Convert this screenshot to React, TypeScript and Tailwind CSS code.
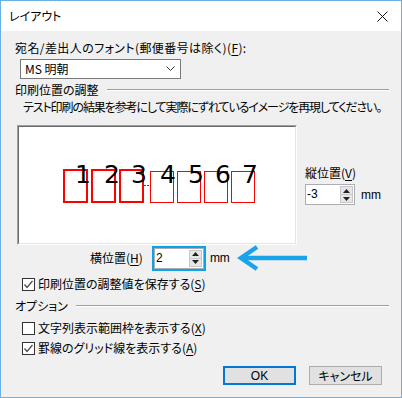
import React from "react";

const jp = "[font-family:'Noto_Sans_CJK_JP','Noto_Sans',sans-serif] [font-feature-settings:'palt']";

function U({ c }: { c: string }) {
  return <span className="underline underline-offset-2">{c}</span>;
}

function Spin({ value }: { value: string }) {
  return (
    <div className="flex h-[21px] w-[50px] border border-[#abadb3] bg-white">
      <div className="flex-1 pl-[1px] text-[12px] leading-[19px] [font-family:'Liberation_Sans',sans-serif]">{value}</div>
      <div className="my-[1px] mr-[1px] flex w-[13px] flex-col border border-[#c8c8c8] bg-[#e6e6e6]">
        <div className="flex flex-1 items-center justify-center border-b border-[#c8c8c8]">
          <svg width="7" height="4" viewBox="0 0 7 4"><path d="M3.5 0 L7 4 L0 4 Z" fill="#222" /></svg>
        </div>
        <div className="flex flex-1 items-center justify-center">
          <svg width="7" height="4" viewBox="0 0 7 4"><path d="M0 0 L7 0 L3.5 4 Z" fill="#222" /></svg>
        </div>
      </div>
    </div>
  );
}

function Check({ checked }: { checked: boolean }) {
  return (
    <div className="flex h-[13px] w-[13px] items-center justify-center border border-[#333333] bg-white">
      {checked && (
        <svg width="11" height="11" viewBox="0 0 11 11">
          <path d="M1.5 5.5 L4 8.5 L9.5 2" stroke="#505050" strokeWidth="1.3" fill="none" />
        </svg>
      )}
    </div>
  );
}

function GroupHeader({ label }: { label: string }) {
  return (
    <div className="flex h-[16px] items-center">
      <span className="text-[12px] leading-[16px]">{label}</span>
      <div className="ml-[8px] flex-1 border-t border-[#a0a0a0] border-b border-b-white" />
    </div>
  );
}

export default function App() {
  const thick = [46, 74, 102];
  const thin = [133, 160, 187, 214];
  const digits = [
    { d: "1", x: 66 },
    { d: "2", x: 95 },
    { d: "3", x: 122 },
    { d: "4", x: 151 },
    { d: "5", x: 179 },
    { d: "6", x: 206 },
    { d: "7", x: 233 },
  ];
  return (
    <div className={`flex h-[398px] w-[402px] flex-col border border-[#6cb1e6] bg-[#f0f0f0] text-[#000] ${jp}`}>
      <div className="flex h-[30px] items-center justify-between bg-white pl-[8px] pr-[13px]">
        <span className="text-[12px]">レイアウト</span>
        <svg width="11" height="11" viewBox="0 0 11 11">
          <path d="M0.5 0.5 L10.5 10.5 M10.5 0.5 L0.5 10.5" stroke="#111" strokeWidth="1" />
        </svg>
      </div>
      <div className="flex flex-1 flex-col pl-[14px] pr-[12px]">
        <div className="mt-[9px] h-[16px] text-[12px] leading-[16px] tracking-[0.4px]">
          宛名/差出人のフォント(郵便番号は除く)(<U c="F" />):
        </div>
        <div className="ml-[5px] mt-[3px] flex h-[20px] w-[161px] items-center justify-between border border-[#7a7a7a] bg-white pl-[4px] pr-[5px]">
          <span className="text-[12px] leading-[16px]">MS 明朝</span>
          <svg width="9" height="6" viewBox="0 0 9 6">
            <path d="M0.5 0.5 L4.5 4.5 L8.5 0.5" stroke="#333" strokeWidth="1" fill="none" />
          </svg>
        </div>
        <div className="mt-[3px]">
          <GroupHeader label="印刷位置の調整" />
        </div>
        <div className="ml-[8px] mt-[1px] h-[16px] text-[12px] leading-[16px] tracking-[-1.1px] whitespace-nowrap">
          テスト印刷の結果を参考にして実際にずれているイメージを再現してください。
        </div>
        <div className="mt-[10px] flex">
          <div className="ml-[2px] h-[120px] w-[280px] border-l border-t border-[#a0a0a0] border-b-white border-r-white border-b border-r">
            <div className="h-full w-full border-l border-t border-[#696969] border-b border-r border-b-[#e3e3e3] border-r-[#e3e3e3] bg-white">
              <svg width="276" height="116" viewBox="2 2 276 116">
                {thick.map((x) => (
                  <rect key={x} x={x + 1} y={45} width={23} height={32} fill="none" stroke="#ff0000" strokeWidth="2" />
                ))}
                {thin.map((x) => (
                  <rect key={x} x={x + 0.5} y={46.5} width={23} height={31} fill="none" stroke="#ff0000" strokeWidth="1" />
                ))}
                <line x1="127" y1="60.5" x2="133" y2="60.5" stroke="#ff0000" strokeWidth="1" strokeDasharray="2 1" />
                {digits.map((g) => (
                  <text
                    key={g.d}
                    x={g.x}
                    y={58}
                    textAnchor="middle"
                    fontSize="25"
                    fontFamily="'DejaVu Sans', sans-serif"
                    fill="#000"
                  >
                    {g.d}
                  </text>
                ))}
              </svg>
            </div>
          </div>
          <div className="ml-[8px] flex flex-col">
            <div className="mt-[40px] h-[16px] text-[12px] leading-[16px]">
              縦位置(<U c="V" />)
            </div>
            <div className="mt-[3px] flex items-center">
              <Spin value="-3" />
              <span className="ml-[6px] text-[12px] [font-family:'Liberation_Sans',sans-serif]">mm</span>
            </div>
          </div>
        </div>
        <div className="mt-[2px] flex h-[22px] items-center">
          <span className="ml-[75px] text-[12px] leading-[16px]">
            横位置(<U c="H" />)
          </span>
          <div className="ml-[9px] border-[3px] border-[#0ea2e6] p-0">
            <div className="-m-[1px]">
              <Spin value="2" />
            </div>
          </div>
          <span className="ml-[4px] text-[12px] [font-family:'Liberation_Sans',sans-serif]">mm</span>
          <svg className="ml-[7px]" width="70" height="26" viewBox="0 0 70 26">
            <path d="M20 2 L4 13 L20 24" stroke="#1aa3e8" strokeWidth="4.5" fill="none" strokeLinejoin="miter" />
            <line x1="5" y1="13" x2="70" y2="13" stroke="#1aa3e8" strokeWidth="4.5" />
          </svg>
        </div>
        <div className="mt-[7px] flex h-[16px] items-center">
          <div className="ml-[7px]">
            <Check checked />
          </div>
          <span className="ml-[3px] text-[12px] leading-[16px]">
            印刷位置の調整値を保存する(<U c="S" />)
          </span>
        </div>
        <div className="mt-[6px]">
          <GroupHeader label="オプション" />
        </div>
        <div className="mt-[6px] flex h-[16px] items-center">
          <div className="ml-[7px]">
            <Check checked={false} />
          </div>
          <span className="ml-[3px] text-[12px] leading-[16px]">
            文字列表示範囲枠を表示する(<U c="X" />)
          </span>
        </div>
        <div className="mt-[4px] flex h-[16px] items-center">
          <div className="ml-[7px]">
            <Check checked />
          </div>
          <span className="ml-[3px] text-[12px] leading-[16px]">
            罫線のグリッド線を表示する(<U c="A" />)
          </span>
        </div>
        <div className="mt-[10px] flex justify-end gap-[13px] pr-[7px]">
          <div className="flex h-[19px] w-[73px] items-center justify-center border-2 border-[#0078d7] bg-[#e1e1e1] text-[12px] [font-family:'Liberation_Sans',sans-serif]">
            OK
          </div>
          <div className="flex h-[19px] w-[73px] items-center justify-center border border-[#adadad] bg-[#e1e1e1] text-[12px]">
            キャンセル
          </div>
        </div>
      </div>
    </div>
  );
}
